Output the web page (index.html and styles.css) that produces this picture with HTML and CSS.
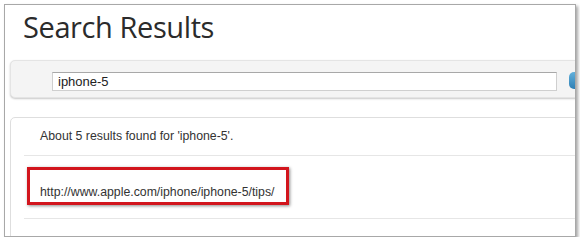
FILE: index.html
```html
<!DOCTYPE html>
<html lang="en">
<head>
    <meta charset="UTF-8">
    <meta name="viewport" content="width=device-width, initial-scale=1.0">
    <title>Search Results</title>
    <link rel="stylesheet" href="styles.css">
</head>
<body>

<div class="window">
    <h1 class="page-title">Search Results</h1>

    <div class="search-bar">
        <input type="text" class="search-input" value="iphone-5" />
        <span class="search-btn"></span>
    </div>

    <div class="results">
        <div class="result-row summary">About 5 results found for 'iphone-5'.</div>
        <div class="result-row link-row">
            <a class="result-link" href="#">http://www.apple.com/iphone/iphone-5/tips/</a>
            <span class="callout"></span>
        </div>
        <div class="result-row empty"></div>
    </div>
</div>

</body>
</html>
```

FILE: styles.css
```css
body {
    margin: 0;
    background-color: #fff;
    font-family: "Liberation Sans", Arial, sans-serif;
}
.window {
    margin: 4px 0 0 4px;
    width: 570px;
    height: 231px;
    border: 1px solid #a8a8a8;
    box-shadow: 2px 2px 3px rgba(0, 0, 0, 0.35);
    overflow: hidden;
    background-color: #fff;
}
.page-title {
    margin: 0;
    padding: 2px 0 0 18px;
    font-family: "Open Sans", sans-serif;
    font-weight: normal;
    font-size: 29px;
    line-height: 40px;
    letter-spacing: -0.4px;
    color: #2b2b2b;
}
.search-bar {
    display: flex;
    align-items: flex-start;
    gap: 12px;
    margin: 13px 0 0 5px;
    width: 640px;
    padding: 11px 0 0 41px;
    box-sizing: border-box;
    height: 38px;
    background-color: #f4f4f4;
    border: 1px solid #e4e4e4;
    border-radius: 5px;
    box-shadow: 0 1px 2px rgba(0, 0, 0, 0.22);
}
.search-input {
    width: 505px;
    height: 19px;
    box-sizing: border-box;
    margin: 0;
    padding: 0 5px;
    border: 1px solid #cfcfcf;
    border-top-color: #a8a8a8;
    font-family: "Liberation Sans", Arial, sans-serif;
    font-size: 13px;
    color: #222;
    background-color: #fff;
}
.search-btn {
    width: 40px;
    height: 17px;
    border-radius: 5px;
    background: linear-gradient(#62b0db, #2e7fb4);
}
.results {
    margin: 19px 0 0 5px;
    width: 620px;
    height: 140px;
    border: 1px solid #dedede;
    border-radius: 5px;
    background-color: #fff;
}
.result-row {
    margin-left: 13px;
    padding-left: 16px;
    border-bottom: 1px solid #e6e6e6;
    font-size: 12.3px;
    line-height: 14px;
    color: #333;
}
.summary {
    padding-top: 11px;
    padding-bottom: 12px;
}
.link-row {
    position: relative;
    padding-top: 29px;
    padding-bottom: 19px;
}
.result-link {
    color: #333;
    text-decoration: none;
}
.callout {
    position: absolute;
    left: 3px;
    top: 11px;
    width: 262px;
    height: 38px;
    box-sizing: border-box;
    border: 3px solid #d2151d;
    box-shadow: 1px 1px 3px rgba(0, 0, 0, 0.45);
}
.empty {
    border-bottom: none;
}
```
